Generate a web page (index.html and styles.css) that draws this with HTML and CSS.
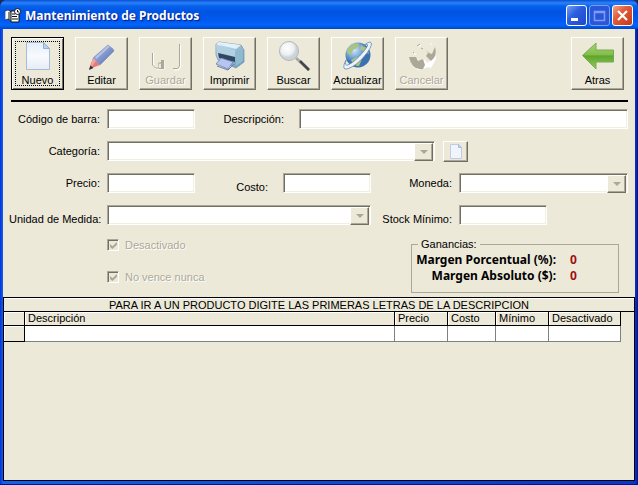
FILE: index.html
```html
<!DOCTYPE html>
<html lang="es">
<head>
  <meta charset="UTF-8" />
  <meta name="viewport" content="width=device-width, initial-scale=1.0"/>
  <title>Mantenimiento de Productos</title>
  <link rel="stylesheet" href="styles.css">
</head>
<body>
  <div class="window">

    <header class="titlebar">
      <svg class="app-icon" width="16" height="16" viewBox="0 0 16 16" aria-hidden="true">
        <path d="M0 3l3-1 3 2v9l-3-2-3 1z" fill="#fff" stroke="#111" stroke-width=".6"/>
        <path d="M6 3h8v11H6z" fill="#fff" stroke="#111"/>
        <path d="M7 6h3M7 8.500h5M7 11h6M4 4v8" stroke="#111" fill="none"/>
        <circle cx="12.500" cy="3.500" r="3" fill="#fff" stroke="#111"/>
        <path d="M12.500 2v2H14" stroke="#111" fill="none"/>
      </svg>
      <h1>Mantenimiento de Productos</h1>
      <div class="window-buttons">
        <button class="win-btn" type="button" aria-label="Minimizar">
          <svg width="19" height="19" viewBox="0 0 19 19"><path d="M4 12h7v3H4z" fill="#fff"/></svg>
        </button>
        <button class="win-btn maximize" type="button" aria-label="Maximizar" disabled>
          <svg width="19" height="19" viewBox="0 0 19 19"><path d="M4.500 5.500h10v9h-10zM4 6.500h11" fill="none" stroke="#7f9df0" stroke-width="1.500"/></svg>
        </button>
        <button class="win-btn close" type="button" aria-label="Cerrar">
          <svg width="19" height="19" viewBox="0 0 19 19"><path d="M5 5l9 9M14 5l-9 9" stroke="#fff" stroke-width="2.200"/></svg>
        </button>
      </div>
    </header>

    <main>
      <div class="toolbar">
        <button class="tool active" type="button">
          <svg width="32" height="30" viewBox="0 0 32 30">
            <defs><linearGradient id="page" x1="0" y1="0" x2="0" y2="1"><stop offset="0" stop-color="#e4eefb"/><stop offset=".5" stop-color="#f8fafd"/><stop offset="1" stop-color="#e6ebf5"/></linearGradient></defs>
            <path d="M4.500 1.500h17l6 6v21h-23z" fill="url(#page)" stroke="#a9bbdb"/>
            <path d="M21.500 1.500v6h6z" fill="#b4d3f0" stroke="#8faed8"/>
          </svg>
          <span>Nuevo</span>
        </button>
        <button class="tool" type="button">
          <svg width="32" height="30" viewBox="0 0 32 30">
            <defs><linearGradient id="pen" x1="0" y1="0" x2="1" y2="1"><stop offset="0" stop-color="#c0cbec"/><stop offset=".5" stop-color="#8297cc"/><stop offset="1" stop-color="#5369aa"/></linearGradient></defs>
            <path d="M22 4l5 4 1 2L14 24l-7-7z" fill="url(#pen)" stroke="#7f8fbd" stroke-width=".7"/>
            <path d="M7 17l7 7-11 4z" fill="#e07c7c"/>
            <path d="M7 17l3 3-6 8z" fill="#f0a5a0"/>
            <path d="M4.500 24.500l3 2.500L3 29z" fill="#332b35"/>
            <path d="M10 17L23 5" stroke="#b7c4e8" stroke-width="2"/>
          </svg>
          <span>Editar</span>
        </button>
        <button class="tool" type="button" disabled>
          <svg width="32" height="30" viewBox="0 0 32 30">
            <path d="M3.500 12v13l3 3H14v-8h-3v6M30.500 4v22l-2 3H24" fill="none" stroke="#fff"/>
            <path d="M2.500 12v12l3 3H13M29.500 3v22l-2 2.500H23" fill="none" stroke="#aca899"/>
            <path d="M8 22l3-1v-2h3v9H9z" fill="#aca899"/>
            <path d="M9 22.500h2V27H9z" fill="#ece9d8"/>
          </svg>
          <span>Guardar</span>
        </button>
        <button class="tool" type="button">
          <svg width="32" height="30" viewBox="0 0 32 30">
            <defs><linearGradient id="prn" x1="0" y1="0" x2="1" y2="1"><stop offset="0" stop-color="#d3e6f3"/><stop offset="1" stop-color="#6595ba"/></linearGradient></defs>
            <path d="M2 3l3-2 22 3 3 5v12l-8 6-18-8-2-5z" fill="url(#prn)" stroke="#6d91ae" stroke-width=".7"/>
            <path d="M2 3l3-2 22 3-5 4z" fill="#e2f0f8"/>
            <path d="M2 4l19 5v7L3 11z" fill="#b1d0e2"/>
            <path d="M4 12l17 4v5L5 17z" fill="#33465f"/>
            <path d="M7 17l12 4-5 7-12-5z" fill="#b5c5ef" stroke="#6b80b8" stroke-width=".8"/>
            <path d="M22 10l7-3v13l-7 5z" fill="#8ebacf"/>
            <path d="M3 25l11 4 6-6" fill="none" stroke="#687ca8"/>
          </svg>
          <span>Imprimir</span>
        </button>
        <button class="tool" type="button">
          <svg width="32" height="30" viewBox="0 0 32 30">
            <defs><radialGradient id="lens" cx=".4" cy=".35"><stop offset="0" stop-color="#fff"/><stop offset=".7" stop-color="#edf0f2"/><stop offset="1" stop-color="#cdd2d7"/></radialGradient></defs>
            <path d="M18 17l13 12" stroke="#a8a8aa" stroke-width="3"/>
            <path d="M22 20l9 9" stroke="#45454b" stroke-width="2.500"/>
            <circle cx="11" cy="10" r="9.500" fill="url(#lens)" stroke="#b2b7bc"/>
          </svg>
          <span>Buscar</span>
        </button>
        <button class="tool" type="button">
          <svg width="32" height="30" viewBox="0 0 32 30">
            <defs><radialGradient id="earth" cx=".35" cy=".3"><stop offset="0" stop-color="#d1e6f8"/><stop offset=".6" stop-color="#78a8d8"/><stop offset="1" stop-color="#3d70af"/></radialGradient></defs>
            <circle cx="16" cy="14" r="12.500" fill="url(#earth)"/>
            <path d="M7 6q5-5 10-3l-2 4-4 2-2 5-4-2q0-4 2-6zM19 4l6 3 2 6-5-2-4-3zM9 19l6-3 5 2-3 7q-6 0-8-6z" fill="#a9c480"/>
            <path d="M4 19Q-1 29 5 28 15 25 25 12 32 2 28 1 26 1 21 5 30 0 22 10 13 21 6 24 2 25 4 19z" fill="#edf4fb" stroke="#6285b4" stroke-width=".8"/>
          </svg>
          <span>Actualizar</span>
        </button>
        <button class="tool" type="button" disabled>
          <svg width="32" height="30" viewBox="0 0 32 30">
            <path d="M4 17h7l2 3 5-2 3 4 3-2 4-9 2-3v10l-5 9-3-1-8 3q-9-1-10-12z" fill="#fff"/>
            <path d="M3 16h7l2 4 5-2 2 6-2 4q-11 2-14-12zM20 9l3 3 3 1 3-7q3 9-4 14l-5-5 2-3z" fill="#aca899"/>
            <path d="M11 5l3-2M7 11l2 2M15 7l2 1" stroke="#aca899"/>
            <path d="M12 6l3-2M8 12l2 2M22 25l3-1M24 4l2-2" stroke="#fff"/>
          </svg>
          <span>Cancelar</span>
        </button>
        <button class="tool back" type="button">
          <svg width="32" height="30" viewBox="0 0 32 30">
            <defs><linearGradient id="arrow" x1="0" y1="0" x2="0" y2="1"><stop offset="0" stop-color="#a8d478"/><stop offset=".45" stop-color="#83bd4d"/><stop offset=".5" stop-color="#5ea52b"/><stop offset="1" stop-color="#92cc5c"/></linearGradient></defs>
            <path d="M.5 14.500L14 2v7h17.500v12H14v7z" fill="url(#arrow)" stroke="#76aa50"/>
          </svg>
          <span>Atras</span>
        </button>
      </div>

      <form class="product-form">
        <label for="codigo">Código de barra:</label>
        <input id="codigo" type="text">
        <div class="description">
          <label for="descripcion">Descripción:</label>
          <input id="descripcion" type="text">
        </div>

        <label for="categoria">Categoría:</label>
        <div class="category">
          <span class="combo"><select id="categoria" disabled></select></span>
          <button class="new-category" type="button" aria-label="Nueva categoría">
            <svg width="14" height="15" viewBox="0 0 14 15">
              <path d="M1.500.5h8l3 3v11h-11z" fill="#f1f4fb" stroke="#c0cbe6"/>
              <path d="M9.500.5v3h3z" fill="#bfd5ef" stroke="#a9bfe0"/>
            </svg>
          </button>
        </div>

        <label for="precio">Precio:</label>
        <input id="precio" type="text">
        <label class="low cost-label" for="costo">Costo:</label>
        <input id="costo" type="text">
        <label for="moneda">Moneda:</label>
        <span class="combo currency"><select id="moneda" disabled></select></span>

        <label class="low" for="unidad">Unidad de Medida:</label>
        <span class="combo unit"><select id="unidad" disabled></select></span>
        <label class="low" for="stock">Stock Mínimo:</label>
        <input id="stock" type="text">
      </form>

      <div class="options">
        <div class="checks">
          <label><input type="checkbox" checked disabled> Desactivado</label>
          <label><input type="checkbox" checked disabled> No vence nunca</label>
        </div>
        <fieldset class="margins">
          <legend>Ganancias:</legend>
          <dl>
            <dt>Margen Porcentual (%):</dt><dd>0</dd>
            <dt>Margen Absoluto ($):</dt><dd>0</dd>
          </dl>
        </fieldset>
      </div>

      <section class="grid" aria-labelledby="grid-title">
        <div class="grid-title" id="grid-title">PARA IR A UN PRODUCTO DIGITE LAS PRIMERAS LETRAS DE LA DESCRIPCION</div>
        <table>
          <colgroup>
            <col class="c-mark"><col><col class="c-price"><col class="c-cost"><col class="c-min"><col class="c-off">
          </colgroup>
          <thead>
            <tr><th></th><th>Descripción</th><th>Precio</th><th>Costo</th><th>Mínimo</th><th>Desactivado</th></tr>
          </thead>
          <tbody>
            <tr><th></th><td></td><td></td><td></td><td></td><td></td></tr>
          </tbody>
        </table>
      </section>
    </main>
  </div>
</body>
</html>
```

FILE: styles.css
```css
* {
  box-sizing: border-box;
}
body {
  margin: 0;
  background: #1c2a55;
  color: #000;
  font-family: "Liberation Sans", Arial, sans-serif;
  font-size: 11px;
  line-height: 14px;
}
button, input, select {
  font: inherit;
  color: inherit;
}
.window {
  display: flex;
  flex-direction: column;
  min-height: 100vh;
  padding: 0 3px 3px;
  background: linear-gradient(90deg, #0831d9, #1260ec 3px, #0a35c8 calc(100% - 3px), #001590);
  border-bottom: 1px solid #001590;
  border-radius: 7px 7px 0 0;
}

/* title bar */
.titlebar {
  display: flex;
  align-items: center;
  height: 29px;
  margin: 0 -3px;
  padding: 2px 5px 0;
  border-radius: 7px 7px 0 0;
  background: linear-gradient(#0a4fd0, #2a83fa 3px, #0761ec 6px, #0054e3 12px, #0159ee 20px, #0264fb 25px, #0047cb);
}
.titlebar h1 {
  flex: 1;
  margin: 0 0 0 4px;
  color: #fff;
  font: bold 12px/16px "Noto Sans", sans-serif;
  text-shadow: 1px 1px 1px #0a1883;
}
.window-buttons {
  display: flex;
  gap: 2px;
}
.win-btn {
  width: 21px;
  height: 21px;
  padding: 0;
  border: 1px solid #fff;
  border-radius: 3px;
  background: linear-gradient(135deg, #7a9ff5, #2d5fe0 40%, #1c49c8);
}
.win-btn svg {
  display: block;
}
.win-btn.maximize {
  border-color: #7f9df0;
  background: #2a56da;
}
.win-btn.close {
  background: linear-gradient(135deg, #f0a48c, #e25a38 40%, #c43a18);
}

main {
  flex: 1;
  display: flex;
  flex-direction: column;
  background: #ece9d8;
}

/* toolbar */
.toolbar {
  display: flex;
  gap: 11px;
  margin: 0 7px 0 8px;
  padding: 8px 4px 10px 0;
  border-bottom: 2px solid #000;
}
.tool {
  display: flex;
  flex-direction: column;
  align-items: center;
  gap: 2px;
  width: 53px;
  height: 53px;
  padding: 3px 0 0;
  border: 1px solid;
  border-color: #fff #716f64 #716f64 #fff;
  background: #ece9d8;
  box-shadow: inset -1px -1px #aca899;
  white-space: nowrap;
}
.tool svg {
  flex: none;
}
.tool.active {
  border-color: #000;
  box-shadow: inset 1px 1px #fff, inset -1px -1px #716f64;
  outline: 1px dotted #000;
  outline-offset: -5px;
}
.tool:disabled {
  color: #aca899;
  text-shadow: 1px 1px #fff;
}
.tool.back {
  margin-left: auto;
}

/* form */
.product-form {
  display: grid;
  grid-template-columns: 98px repeat(5, 88fr) 81fr;
  grid-auto-rows: 20px;
  row-gap: 12px;
  align-items: center;
  padding: 7px 7px 0 6px;
}
.product-form label {
  padding-right: 7px;
  text-align: right;
  white-space: nowrap;
}
.product-form .low {
  padding-top: 8px;
}
.product-form .cost-label {
  padding-right: 15px;
}
.product-form input,
.combo select {
  display: block;
  width: 100%;
  min-width: 0;
  height: 20px;
  padding: 0 3px;
  border: 1px solid;
  border-color: #aca899 #fff #fff #aca899;
  border-radius: 0;
  background: #fff;
  box-shadow: inset 1px 1px #716f64, inset -1px -1px #f1efe2;
}
.combo select {
  appearance: none;
  opacity: 1;
}
.description {
  grid-column: 3 / -1;
  display: flex;
  align-items: center;
}
.description label {
  flex: 0 0 104px;
  padding-right: 15px;
}
.category {
  grid-column: 2 / -1;
  display: flex;
  gap: 8px;
  padding-right: 160px;
}
.combo {
  position: relative;
  flex: 1;
}
.combo.currency {
  grid-column: 6 / -1;
}
.combo.unit {
  grid-column: 2 / 5;
}
.combo::before {
  content: "";
  position: absolute;
  top: 2px;
  right: 2px;
  width: 17px;
  height: 16px;
  border: 1px solid;
  border-color: #fff #716f64 #716f64 #fff;
  background: #ece9d8;
  box-shadow: inset -1px -1px #aca899;
}
.combo::after {
  content: "";
  position: absolute;
  top: 9px;
  right: 7px;
  border: 4px solid transparent;
  border-top-color: #aca899;
  border-bottom: 0;
}
.new-category {
  display: flex;
  align-items: center;
  justify-content: center;
  width: 25px;
  height: 21px;
  margin-bottom: -1px;
  padding: 0;
  border: 1px solid;
  border-color: #fff #716f64 #716f64 #fff;
  background: #ece9d8;
  box-shadow: inset -1px -1px #aca899;
}

/* checks and margins */
.options {
  display: flex;
  justify-content: space-between;
  padding: 12px 16px 4px 104px;
}
.checks {
  display: flex;
  flex-direction: column;
  gap: 18px;
  padding-top: 1px;
}
.checks label {
  display: flex;
  align-items: center;
  gap: 6px;
  color: #aca899;
  text-shadow: 1px 1px #fff;
}
.checks input {
  appearance: none;
  width: 12px;
  height: 12px;
  margin: 0;
  border: 1px solid;
  border-color: #aca899 #fff #fff #aca899;
  box-shadow: inset 1px 1px #716f64;
}
.checks input::before {
  content: "";
  display: block;
  width: 7px;
  height: 7px;
  margin: 2px;
  background: #aca899;
  clip-path: polygon(0 30%, 35% 62%, 100% 0, 100% 40%, 35% 100%, 0 70%);
}
.margins {
  width: 208px;
  height: 56px;
  margin: 0;
  padding: 1px 0 0;
  border: 1px solid #aca899;
}
.margins legend {
  margin-left: 6px;
  padding: 0 3px;
}
.margins dl {
  display: grid;
  grid-template-columns: 144px 1fr;
  column-gap: 14px;
  margin: 0;
  font: bold 12px/16px "Noto Sans", sans-serif;
  white-space: nowrap;
}
.margins dt {
  text-align: right;
}
.margins dd {
  margin: 0;
  color: #a01010;
}

/* product grid */
.grid {
  flex: 1;
  border: 1px solid #000;
}
.grid-title {
  height: 14px;
  border-top: 1px solid #fff;
  border-bottom: 1px solid #000;
  line-height: 13px;
  text-align: center;
}
.grid table {
  width: calc(100% - 13px);
  table-layout: fixed;
  border-collapse: separate;
  border-spacing: 0;
}
.grid th {
  height: 14px;
  padding: 0 3px;
  border-right: 1px solid #000;
  border-bottom: 1px solid #000;
  background: #ece9d8;
  box-shadow: inset 1px 1px #fff;
  font-weight: normal;
  line-height: 13px;
  text-align: left;
  white-space: nowrap;
}
.grid td {
  height: 16px;
  padding: 0;
  border-right: 1px solid #808080;
  border-bottom: 1px solid #808080;
  background: #fff;
}
.c-mark {
  width: 21px;
}
.c-price {
  width: 53px;
}
.c-cost {
  width: 48px;
}
.c-min {
  width: 53px;
}
.c-off {
  width: 72px;
}
```
